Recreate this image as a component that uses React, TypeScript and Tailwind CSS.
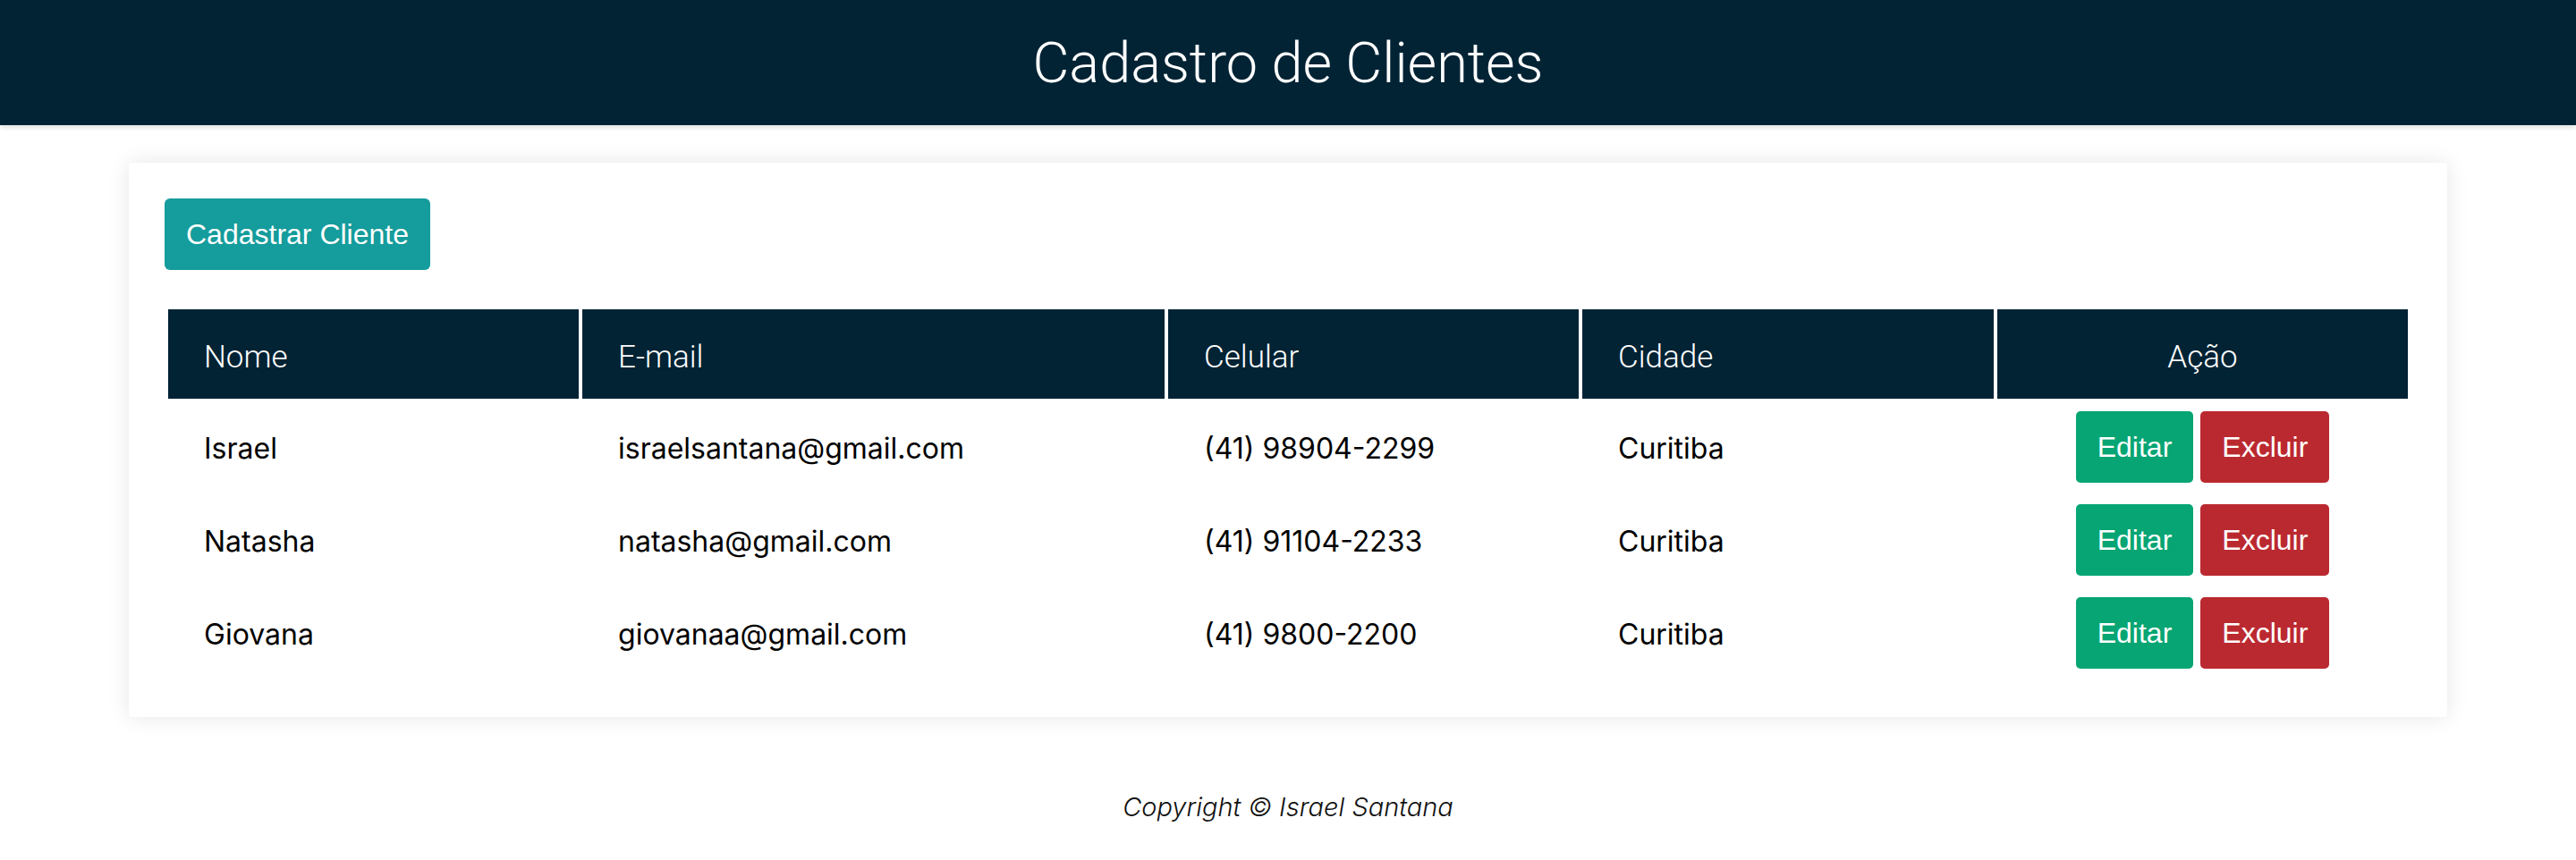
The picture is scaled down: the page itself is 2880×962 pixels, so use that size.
import React from "react"

interface Cliente {
  nome: string;
  email: string;
  celular: string;
  cidade: string;
}

const clientes: Cliente[] = [
  { nome: "Israel", email: "israelsantana@gmail.com", celular: "(41) 98904-2299", cidade: "Curitiba" },
  { nome: "Natasha", email: "natasha@gmail.com", celular: "(41) 91104-2233", cidade: "Curitiba" },
  { nome: "Giovana", email: "giovanaa@gmail.com", celular: "(41) 9800-2200", cidade: "Curitiba" },
];

export default function App() {
  return (
    <div className="min-h-screen bg-white font-['Inter',sans-serif] text-black">
      <header className="h-[140px] bg-[#012334] flex items-center justify-center shadow-[0_2px_6px_rgba(0,0,0,0.15)]">
        <h1 className="font-['Roboto',sans-serif] font-light text-[63px] leading-none text-white">
          Cadastro de Clientes
        </h1>
      </header>

      <main className="px-[144px] pt-[42px]">
        <div className="bg-white rounded-[4px] p-10 shadow-[0_0_24px_rgba(0,0,0,0.1)]">
          <button className="h-[80px] px-6 rounded-md bg-[#159c9c] text-white font-['Liberation_Sans',Arial,sans-serif] text-[32px] leading-none">
            Cadastrar Cliente
          </button>

          <table className="mt-10 w-full table-fixed border-separate border-spacing-1">
            <thead>
              <tr className="font-['Roboto',sans-serif] font-light text-[35px] text-white">
                <th className="w-[459px] h-[100px] bg-[#012334] px-10 pt-2 text-left font-light">Nome</th>
                <th className="w-[651px] h-[100px] bg-[#012334] px-10 pt-2 text-left font-light">E-mail</th>
                <th className="w-[459px] h-[100px] bg-[#012334] px-10 pt-2 text-left font-light">Celular</th>
                <th className="w-[460px] h-[100px] bg-[#012334] px-10 pt-2 text-left font-light">Cidade</th>
                <th className="h-[100px] bg-[#012334] px-10 pt-2 text-center font-light">Ação</th>
              </tr>
            </thead>
            <tbody className="text-[32px]">
              {clientes.map((c) => (
                <tr key={c.email}>
                  <td className="px-10 pt-3 pb-2">{c.nome}</td>
                  <td className="px-10 pt-3 pb-2">{c.email}</td>
                  <td className="px-10 pt-3 pb-2">{c.celular}</td>
                  <td className="px-10 pt-3 pb-2">{c.cidade}</td>
                  <td className="py-2.5">
                    <div className="flex justify-center gap-2 font-['Liberation_Sans',Arial,sans-serif]">
                      <button className="h-[80px] px-6 rounded-[5px] bg-[#06a573] text-white text-[32px] leading-none">
                        Editar
                      </button>
                      <button className="h-[80px] px-6 rounded-[5px] bg-[#bb2930] text-white text-[32px] leading-none">
                        Excluir
                      </button>
                    </div>
                  </td>
                </tr>
              ))}
            </tbody>
          </table>
        </div>
      </main>

      <footer className="mt-[81px] text-center">
        <p className="italic font-light text-[29px] leading-[40px] text-[#111]">
          Copyright © Israel Santana
        </p>
      </footer>
    </div>
  );
}
